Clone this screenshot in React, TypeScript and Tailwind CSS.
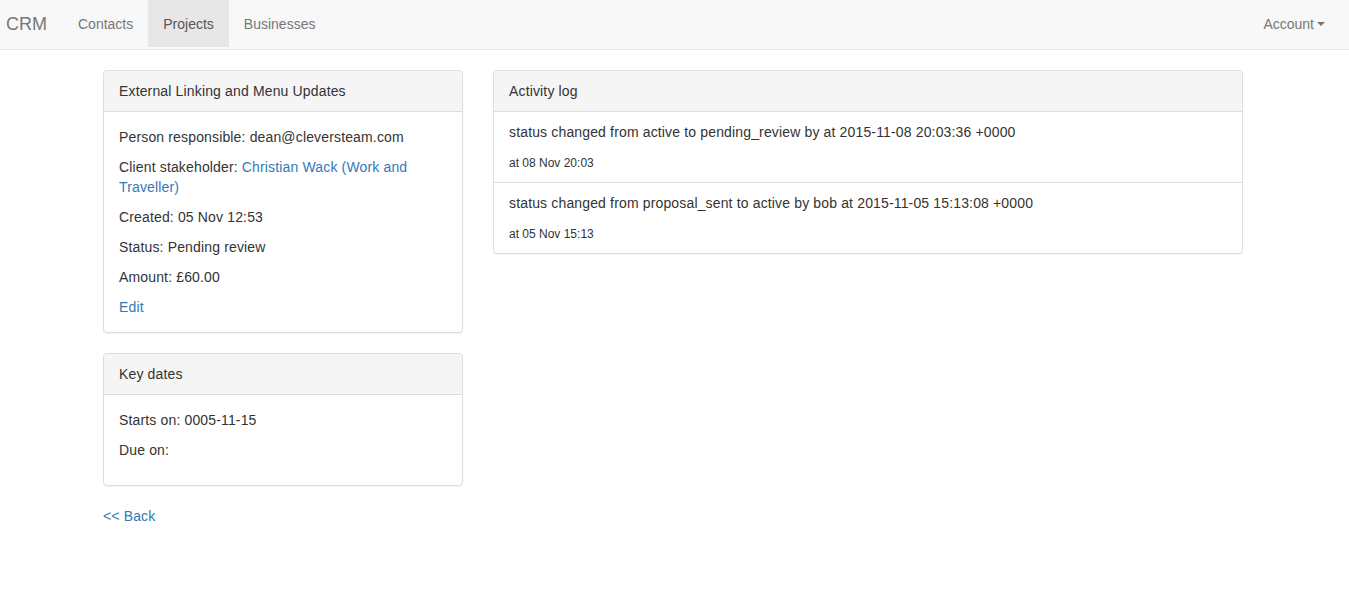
const font = 'font-["Liberation_Sans",Arial,sans-serif]';

function NavLink({ label, active }: { label: string; active?: boolean }) {
  return (
    <a
      className={
        active
          ? 'flex items-center px-[15px] h-full bg-[#e7e7e7] text-[#555]'
          : 'flex items-center px-[15px] h-full text-[#777]'
      }
    >
      {label}
    </a>
  );
}

function Panel({ title, children }: { title: string; children: React.ReactNode }) {
  return (
    <div className="mb-5 rounded border border-[#ddd] bg-white shadow-[0_1px_1px_rgba(0,0,0,0.05)]">
      <div className="h-[41px] px-[15px] flex items-center bg-[#f5f5f5] border-b border-[#ddd] rounded-t">
        {title}
      </div>
      {children}
    </div>
  );
}

function LogItem({ text, at, last }: { text: string; at: string; last?: boolean }) {
  return (
    <div className={last ? 'px-[15px] py-[10px]' : 'px-[15px] py-[10px] border-b border-[#ddd]'}>
      <p className="mb-[10px]">{text}</p>
      <p>
        <small className="text-xs tracking-normal">{at}</small>
      </p>
    </div>
  );
}

export default function App() {
  return (
    <div className={`${font} text-sm leading-5 text-[#333] bg-white min-h-screen`}>
      <nav className="h-[50px] bg-[#f8f8f8] border-b border-[#e7e7e7] flex items-stretch justify-between">
        <div className="flex items-stretch h-[49px] pb-[2px]">
          <a className="flex items-center pl-[6px] pr-[16px] text-lg text-[#777]">CRM</a>
          <NavLink label="Contacts" />
          <NavLink label="Projects" active />
          <NavLink label="Businesses" />
        </div>
        <div className="flex items-stretch h-[49px] pb-[2px] pr-[9px]">
          <a className="flex items-center px-[15px] text-[#777]">
            Account
            <span className="ml-[3px] mt-[1px] w-0 h-0 border-x-4 border-x-transparent border-t-4 border-t-[#777]" />
          </a>
        </div>
      </nav>

      <div className="flex gap-[30px] pl-[103px] pt-5 tracking-[0.15px]">
        <div className="w-[360px]">
          <Panel title="External Linking and Menu Updates">
            <div className="p-[15px]">
              <p className="mb-[10px]">Person responsible: dean@cleversteam.com</p>
              <p className="mb-[10px]">
                Client stakeholder: <a className="text-[#337ab7]">Christian Wack (Work and Traveller)</a>
              </p>
              <p className="mb-[10px]">Created: 05 Nov 12:53</p>
              <p className="mb-[10px]">Status: Pending review</p>
              <p className="mb-[10px]">Amount: £60.00</p>
              <a className="block text-[#337ab7]">Edit</a>
            </div>
          </Panel>
          <Panel title="Key dates">
            <div className="p-[15px]">
              <p className="mb-[10px]">Starts on: 0005-11-15</p>
              <p className="mb-[10px]">Due on:</p>
            </div>
          </Panel>
          <a className="text-[#337ab7]">&lt;&lt; Back</a>
        </div>
        <div className="w-[750px]">
          <Panel title="Activity log">
            <LogItem
              text="status changed from active to pending_review by at 2015-11-08 20:03:36 +0000"
              at="at 08 Nov 20:03"
            />
            <LogItem
              text="status changed from proposal_sent to active by bob at 2015-11-05 15:13:08 +0000"
              at="at 05 Nov 15:13"
              last
            />
          </Panel>
        </div>
      </div>
    </div>
  );
}
